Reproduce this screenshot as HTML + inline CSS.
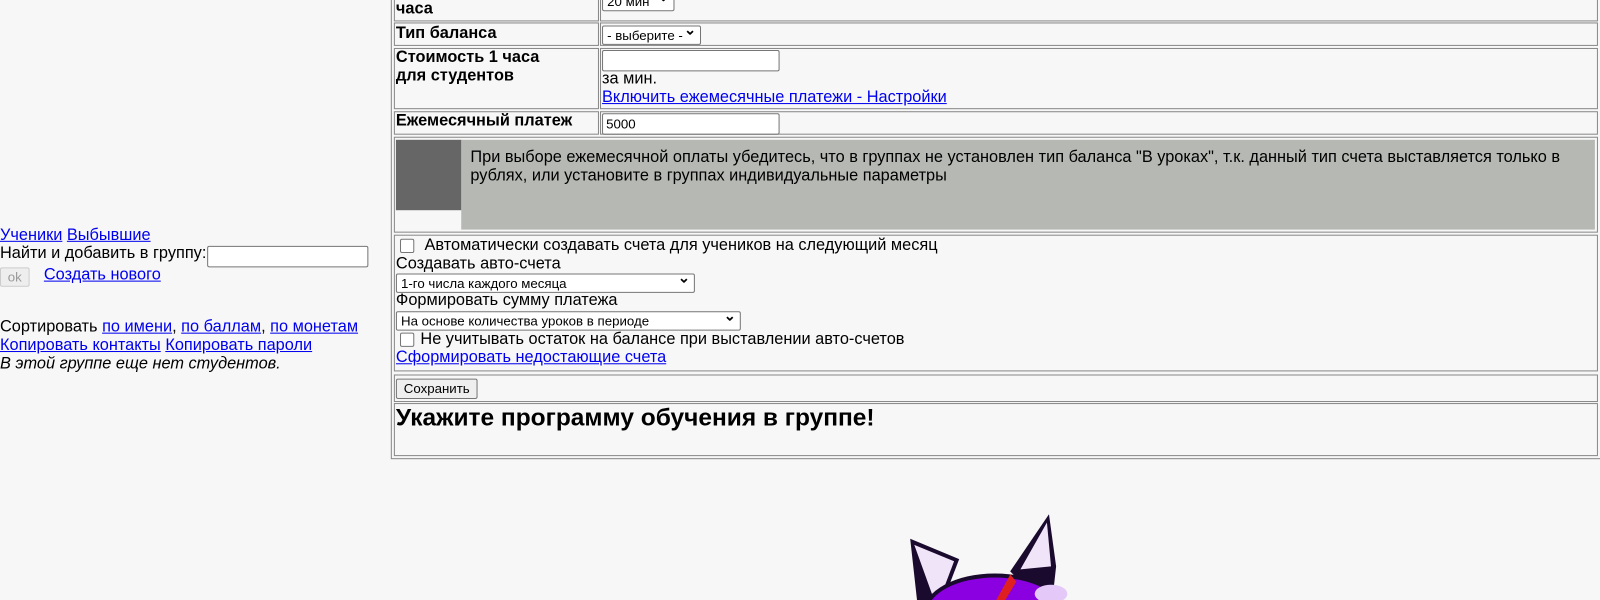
<!DOCTYPE html>
<html><head><meta charset="utf-8"><style>
html,body{margin:0;background:#f7f7f7;width:1600px;height:600px;overflow:hidden}
#w{position:absolute;left:0;top:0;width:1568px;height:588px;transform:scale(1.0204);transform-origin:0 0;overflow:hidden;font-family:"Liberation Sans",sans-serif;font-size:16px;color:#000}
.a{position:absolute}
a{color:#00e;text-decoration:underline}
.c{position:absolute;border:1px solid #888;box-sizing:border-box}
b{font-weight:bold}
.sel{position:absolute;border:1px solid #767676;border-radius:2px;background:#fff;font-size:13px;box-sizing:border-box;padding:1px 4px;height:19px;line-height:15px}
.sel:after{content:"⌄";position:absolute;right:4px;top:-4px;font-weight:bold;font-size:14px}
.inp{position:absolute;border:1px solid #767676;border-radius:2px;background:#fff;box-sizing:border-box;height:21px;font-size:13px;padding:2px 3px}
.cb{position:absolute;width:12px;height:12px;border:1px solid #767676;border-radius:2px;background:#fff}
</style></head><body><div id="w">
<div class="a" style="left:0;top:222px;line-height:18px">
<a>Ученики</a> <a>Выбывшие</a><br>Найти и добавить в группу:</div>
<div class="inp" style="left:203px;top:241px;width:158px"></div>
<div class="a" style="left:0;top:262px;width:29px;height:19px;border:1px solid #ccc;border-radius:2px;background:#eee;color:#999;font-size:13px;text-align:center;line-height:17px;box-sizing:border-box">ok</div>
<div class="a" style="left:43px;top:261px"><a>Создать нового</a></div>
<div class="a" style="left:0;top:312px;line-height:18px">Сортировать <a>по имени</a>, <a>по баллам</a>, <a>по монетам</a><br><a>Копировать контакты</a> <a>Копировать пароли</a><br><i>В этой группе еще нет студентов.</i></div>
<div class="c" style="left:383px;top:-5px;width:1186px;height:455px"></div>
<div class="c" style="left:386px;top:-5px;width:201px;height:26px"></div>
<div class="c" style="left:588px;top:-5px;width:978px;height:26px"></div>
<div class="a" style="left:388px;top:0px"><b>часа</b></div>
<div class="sel" style="left:590px;top:-8px;width:71px">20 мин</div>
<div class="c" style="left:386px;top:22px;width:201px;height:23px"></div>
<div class="c" style="left:588px;top:22px;width:978px;height:23px"></div>
<div class="a" style="left:388px;top:24px"><b>Тип баланса</b></div>
<div class="sel" style="left:590px;top:25px;width:97px">- выберите -</div>
<div class="c" style="left:386px;top:47px;width:201px;height:60px"></div>
<div class="c" style="left:588px;top:47px;width:978px;height:60px"></div>
<div class="a" style="left:388px;top:48px;line-height:18px"><b>Стоимость 1 часа<br>для студентов</b></div>
<div class="inp" style="left:590px;top:49px;width:174px"></div>
<div class="a" style="left:590px;top:69px;line-height:18px">за мин.<br><a>Включить ежемесячные платежи - Настройки</a></div>
<div class="c" style="left:386px;top:109px;width:201px;height:23px"></div>
<div class="c" style="left:588px;top:109px;width:978px;height:23px"></div>
<div class="a" style="left:388px;top:110px"><b>Ежемесячный платеж</b></div>
<div class="inp" style="left:590px;top:111px;width:174px">5000</div>
<div class="c" style="left:386px;top:134px;width:1180px;height:94px"></div>
<div class="a" style="left:452px;top:137px;width:1111px;height:88px;background:#b6b9b3"></div>
<div class="a" style="left:388px;top:137px;width:64px;height:69px;background:#666"></div>
<div class="a" style="left:461px;top:146px;width:1095px;line-height:18px">При выборе ежемесячной оплаты убедитесь, что в группах не установлен тип баланса "В уроках", т.к. данный тип счета выставляется только в рублях, или установите в группах индивидуальные параметры</div>
<div class="c" style="left:386px;top:230px;width:1180px;height:134px"></div>
<div class="cb" style="left:392px;top:234px"></div>
<div class="a" style="left:416px;top:232px">Автоматически создавать счета для учеников на следующий месяц</div>
<div class="a" style="left:388px;top:250px">Создавать авто-счета</div>
<div class="sel" style="left:388px;top:268px;width:293px">1-го числа каждого месяца</div>
<div class="a" style="left:388px;top:286px">Формировать сумму платежа</div>
<div class="sel" style="left:388px;top:305px;width:338px">На основе количества уроков в периоде</div>
<div class="cb" style="left:392px;top:326px"></div>
<div class="a" style="left:412px;top:324px">Не учитывать остаток на балансе при выставлении авто-счетов</div>
<div class="a" style="left:388px;top:342px"><a>Сформировать недостающие счета</a></div>
<div class="c" style="left:386px;top:367px;width:1180px;height:27px"></div>
<div class="a" style="left:388px;top:371px;width:80px;height:20px;border:1px solid #767676;border-radius:2px;background:#efefef;font-size:13px;text-align:center;line-height:18px;box-sizing:border-box">Сохранить</div>
<div class="c" style="left:386px;top:395px;width:1180px;height:52px"></div>
<div class="a" style="left:388px;top:396px;font-size:24px;font-weight:bold">Укажите программу обучения в группе!</div>
<svg class="a" style="left:880px;top:500px" width="170" height="88" viewBox="0 0 170 88">
<path d="M12 28 L60 48 L40 100 L20 100 Z" fill="#1a0a2e"/>
<path d="M16 34 L55 50 L38 95 Z" fill="#f0e4f8"/>
<path d="M148 4 L155 55 L150 100 L110 60 Z" fill="#1a0a2e"/>
<path d="M146 12 L150 55 L120 58 Z" fill="#f0e4f8"/>
<ellipse cx="95" cy="100" rx="70" ry="38" fill="#1a0a2e"/>
<ellipse cx="95" cy="100" rx="66" ry="34" fill="#8a00e0"/>
<ellipse cx="150" cy="82" rx="16" ry="9" fill="#e4c8f8"/>
<path d="M110 63 L116 70 L98 100 L92 96 Z" fill="#e02020"/>
</svg>
</div></body></html>
